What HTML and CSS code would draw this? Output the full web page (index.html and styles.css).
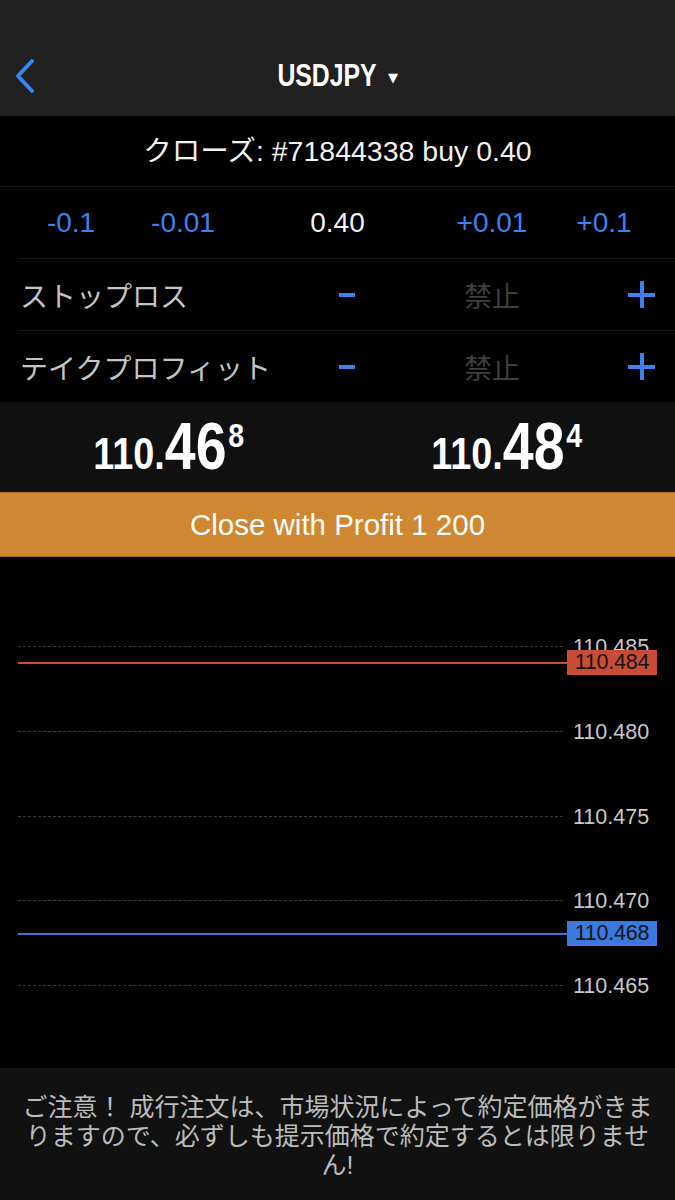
FILE: index.html
```html
<!DOCTYPE html>
<html lang="ja">
<head>
    <meta charset="UTF-8">
    <meta name="viewport" content="width=device-width, initial-scale=1.0">
    <title>USDJPY - クローズ</title>
    <link rel="stylesheet" href="styles.css">
</head>
<body>

<header class="topbar">
    <div class="nav">
        <a class="back" href="#">
            <svg width="22" height="36" viewBox="0 0 22 36"><polyline points="18,3 4,18 18,33" fill="none" stroke="#3a82f6" stroke-width="4" stroke-linecap="round" stroke-linejoin="round"/></svg>
        </a>
        <div class="symbol"><span class="narrow">USDJPY</span><span class="caret">&#9660;</span></div>
        <div></div>
    </div>
</header>

<div class="close-title">クローズ: #71844338 buy 0.40</div>

<div class="volume">
    <span class="step">-0.1</span>
    <span class="step">-0.01</span>
    <span class="value">0.40</span>
    <span class="step">+0.01</span>
    <span class="step">+0.1</span>
</div>

<div class="level">
    <span class="label">ストップロス</span>
    <span class="minus"></span>
    <span class="off">禁止</span>
    <span class="plus"></span>
</div>
<div class="level">
    <span class="label">テイクプロフィット</span>
    <span class="minus"></span>
    <span class="off">禁止</span>
    <span class="plus"></span>
</div>

<div class="prices">
    <div><span class="price"><span class="small">110.</span><span class="big">46</span><sup>8</sup></span></div>
    <div><span class="price"><span class="small">110.</span><span class="big">48</span><sup>4</sup></span></div>
</div>

<button class="close-button">Close with Profit 1 200</button>

<div class="chart">
    <!-- escala: 110.485 en top 89, ~17px por punto -->
    <div class="grid" style="top: 89px"><span class="tick">110.485</span></div>
    <div class="grid" style="top: 174px"><span class="tick">110.480</span></div>
    <div class="grid" style="top: 259px"><span class="tick">110.475</span></div>
    <div class="grid" style="top: 343px"><span class="tick">110.470</span></div>
    <div class="grid" style="top: 428px"><span class="tick">110.465</span></div>

    <div class="quote ask" style="top: 106px"><span class="tag">110.484</span></div>
    <div class="quote bid" style="top: 377px"><span class="tag">110.468</span></div>
</div>

<footer class="notice">
    ご注意！ 成行注文は、市場状況によって約定価格がきま<br>りますので、必ずしも提示価格で約定するとは限りませ<br>ん!
</footer>

</body>
</html>
```

FILE: styles.css
```css
* {
    box-sizing: border-box;
}
body {
    font-family: "Liberation Sans", "Noto Sans CJK JP", sans-serif;
    background-color: #000;
    color: white;
    margin: 0;
    padding: 0;
    width: 675px;
}
.topbar {
    background-color: #212121;
    height: 116px;
    padding-top: 36px;
}
.nav {
    height: 80px;
    display: grid;
    grid-template-columns: 1fr auto 1fr;
    align-items: center;
}
.back {
    padding-left: 14px;
    display: flex;
    align-items: center;
}
.symbol {
    display: flex;
    align-items: center;
    font-weight: bold;
    font-size: 31px;
}
.narrow {
    display: inline-block;
    transform: scaleX(0.8);
    margin: 0 -12px;
}
.caret {
    font-family: "DejaVu Sans", sans-serif;
    font-size: 13px;
    margin-left: 11px;
    padding-top: 2px;
}
.close-title {
    height: 71px;
    line-height: 70px;
    text-align: center;
    font-size: 28.5px;
    color: #f2f2f2;
    border-bottom: 1px solid #1a1a1a;
}
.volume {
    height: 71px;
    display: grid;
    grid-template-columns: 112px 112px 1fr 112px 112px;
    padding: 0 15px;
    align-items: center;
    text-align: center;
    font-size: 28px;
}
.step {
    color: #3b82f0;
}
.value {
    color: #f2f2f2;
}
.level {
    height: 72px;
    margin-left: 18px;
    padding: 0 20px 0 2px;
    border-top: 1px solid #1a1a1a;
    display: grid;
    grid-template-columns: 282px 90px 200px 1fr;
    align-items: center;
}
.label {
    font-size: 28px;
    color: #c4c4c4;
    white-space: nowrap;
}
.minus {
    justify-self: center;
    width: 16px;
    height: 4px;
    background-color: #3b82f0;
}
.off {
    justify-self: center;
    font-size: 28px;
    color: #3e3e3e;
}
.plus {
    justify-self: end;
    position: relative;
    width: 27px;
    height: 27px;
}
.plus::before,
.plus::after {
    content: "";
    position: absolute;
    background-color: #3b82f0;
}
.plus::before {
    left: 0;
    right: 0;
    top: 12px;
    height: 4px;
}
.plus::after {
    top: 0;
    bottom: 0;
    left: 12px;
    width: 4px;
}
.prices {
    height: 90px;
    background-color: #101010;
    display: grid;
    grid-template-columns: 1fr 1fr;
    align-items: center;
    text-align: center;
}
.price {
    display: inline-block;
    font-weight: bold;
    line-height: 1;
    margin: -2px -20px 0;
    transform: scaleX(0.84);
    white-space: nowrap;
}
.price .small {
    font-size: 45px;
}
.price .big {
    font-size: 66px;
    margin-right: 2px;
}
.price sup {
    font-size: 34px;
    vertical-align: 22px;
}
.close-button {
    display: block;
    width: 100%;
    height: 65px;
    margin: 0;
    background-color: #cf8731;
    border: none;
    border-top: 1px solid #b4702a;
    border-bottom: 1px solid #a7661f;
    color: white;
    font-family: "Liberation Sans", sans-serif;
    font-size: 29.5px;
    cursor: pointer;
}
.chart {
    position: relative;
    height: 511px;
    background-color: #000;
}
.grid {
    position: absolute;
    left: 18px;
    width: 545px;
    border-top: 1px dashed #3a3a3a;
}
.tick {
    position: absolute;
    left: 555px;
    top: -13px;
    font-size: 21.5px;
    line-height: 26px;
    color: #c8c8c8;
}
.quote {
    position: absolute;
    left: 18px;
    width: 549px;
    height: 2px;
    margin-top: -1px;
}
.quote.ask {
    background-color: #d04b36;
}
.quote.bid {
    background-color: #3c74d8;
}
.tag {
    position: absolute;
    left: 549px;
    top: -12px;
    width: 90px;
    height: 25px;
    line-height: 25px;
    text-align: center;
    font-size: 21.5px;
    color: #151515;
    letter-spacing: -0.2px;
}
.ask .tag {
    background-color: #c94c36;
}
.bid .tag {
    background-color: #3b78e0;
}
.notice {
    background-color: #111;
    height: 132px;
    padding-top: 25px;
    text-align: center;
    font-size: 25px;
    line-height: 29px;
    color: #bcbcbc;
    white-space: nowrap;
}
```
